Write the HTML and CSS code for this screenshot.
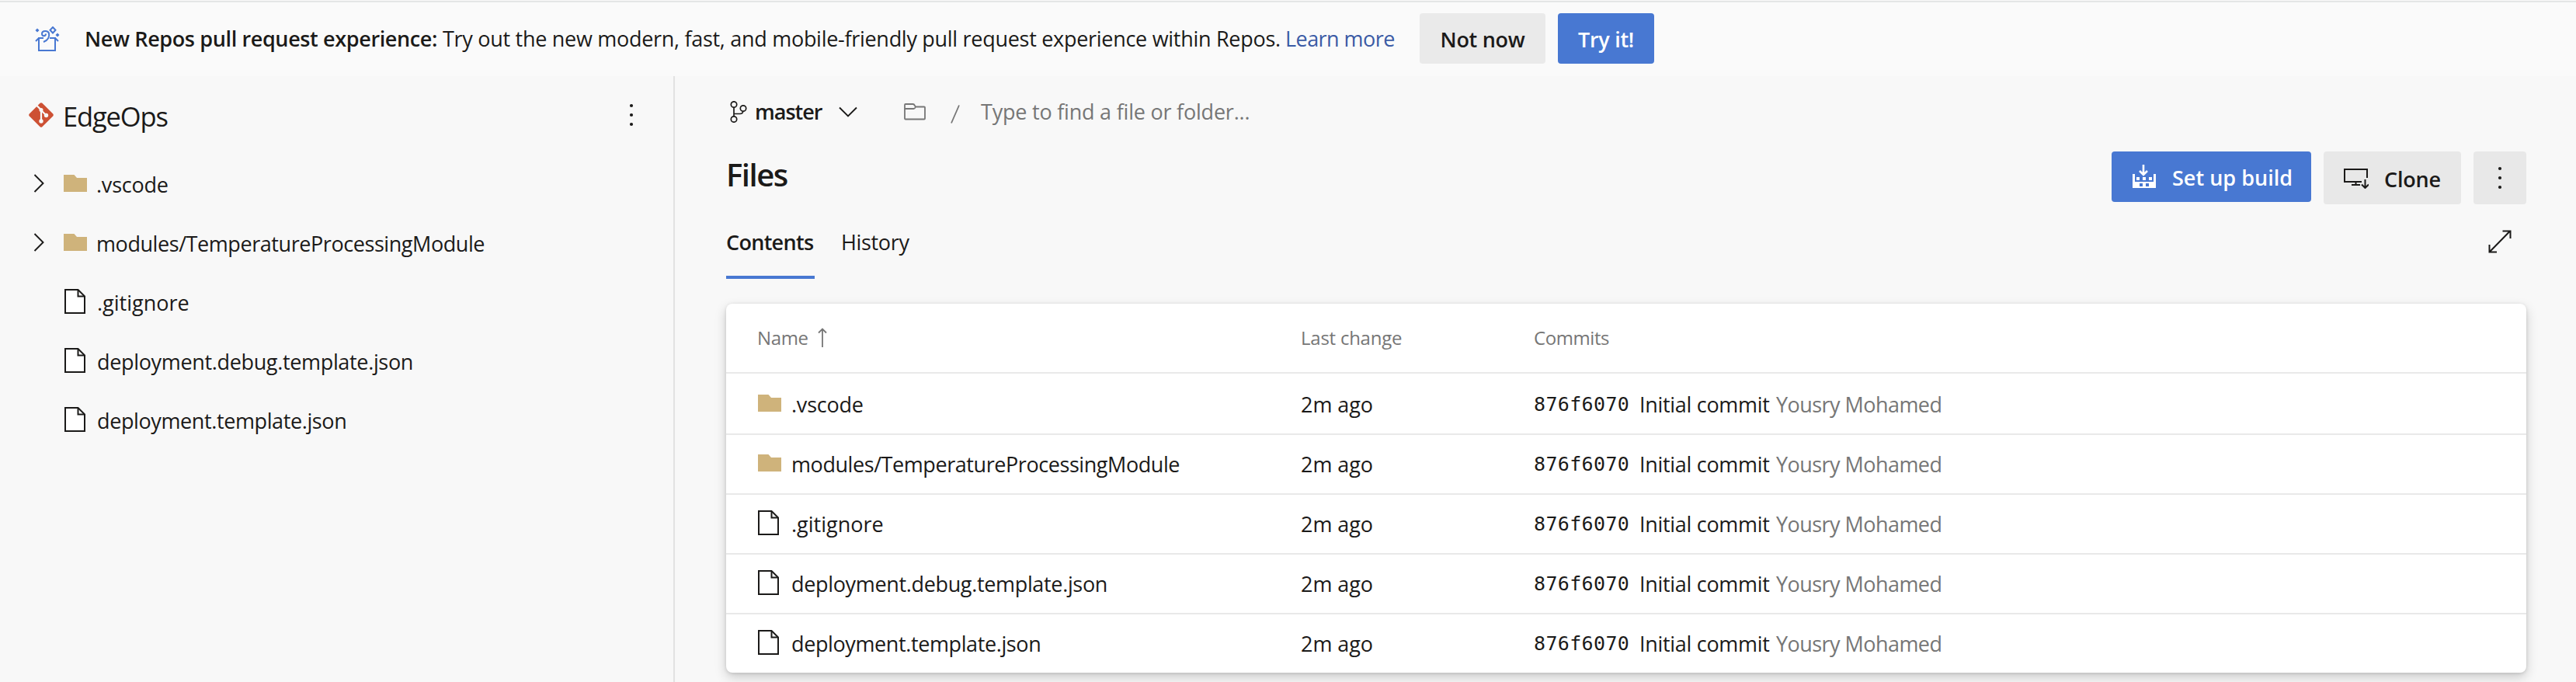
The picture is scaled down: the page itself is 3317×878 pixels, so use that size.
FILE: index.html
```html
<!DOCTYPE html>
<html lang="en">
<head>
<meta charset="utf-8">
<title>EdgeOps - Files</title>
<link rel="stylesheet" href="styles.css">
</head>
<body>
<svg class="sprite" aria-hidden="true">
  <symbol id="folder" viewBox="0 0 30 22"><path d="M0 0H13.5L17 4H30V22H0Z" fill="#cfb37b"/></symbol>
  <symbol id="file" viewBox="0 0 27 32"><path d="M1 1H17.5L26 9.5V31H1Z" fill="#fff" stroke="#1b1a19" stroke-width="2"/><path d="M17.5 1V9.5H26" fill="none" stroke="#1b1a19" stroke-width="2"/></symbol>
  <symbol id="chevron" viewBox="0 0 14 24"><path d="M1.5 1L12.5 12L1.5 23" fill="none" stroke="#1b1a19" stroke-width="1.9"/></symbol>
  <symbol id="dots" viewBox="0 0 6 30"><g fill="#1b1a19"><circle cx="3" cy="3" r="2.1"/><circle cx="3" cy="15" r="2.1"/><circle cx="3" cy="27" r="2.1"/></g></symbol>
</svg>

<header class="banner">
  <svg class="gift" viewBox="0 0 32 34" fill="none" stroke="#4878d2" stroke-width="2">
    <path d="M11 15H5V31H26V15H19M5 15L1 19M26 15L30 19"/>
    <path d="M11 20C17 18 19 13 18 9C17 5 9 5 9 9.500C9 13 14 13 14 9.500"/>
    <path d="M23 1L26.500 4.800L23 8.500L19.500 4.800Z"/>
    <path d="M3 2.500L5.500 5L3 7.500L0.500 5ZM29 8.500L31.500 11L29 13.500L26.500 11Z" fill="#4878d2" stroke="none"/>
  </svg>
  <p class="banner-text"><b>New Repos pull request experience:</b><span class="banner-body">Try out the new modern, fast, and mobile-friendly pull request experience within Repos.</span><a class="link">Learn more</a></p>
  <button class="btn not-now">Not now</button>
  <button class="btn primary try-it">Try it!</button>
</header>

<div class="layout">
  <aside class="sidebar">
    <div class="repo">
      <svg class="git" viewBox="0 0 32 32"><path d="M14.600 .8Q16 -.4 17.400 .8L31.200 14.600Q32.400 16 31.200 17.400L17.400 31.200Q16 32.400 14.600 31.200L.8 17.400Q-.4 16 .8 14.600Z" fill="#cd5134"/><path d="M10 3.500L16 9.500V24M16 10L22.500 16.500" fill="none" stroke="#f8f8f8" stroke-width="2.200"/><circle cx="16" cy="9.500" r="2.500" fill="#f8f8f8"/><circle cx="16" cy="24" r="2.700" fill="#f8f8f8"/><circle cx="22.500" cy="16.500" r="2.700" fill="#f8f8f8"/></svg>
      <span class="repo-name">EdgeOps</span>
      <svg class="dots"><use href="#dots"/></svg>
    </div>
    <ul class="tree">
      <li><svg class="chevron"><use href="#chevron"/></svg><svg class="folder"><use href="#folder"/></svg><span class="t-vscode">.vscode</span></li>
      <li><svg class="chevron"><use href="#chevron"/></svg><svg class="folder"><use href="#folder"/></svg><span class="t-modules">modules/TemperatureProcessingModule</span></li>
      <li><svg class="file"><use href="#file"/></svg><span class="t-git">.gitignore</span></li>
      <li><svg class="file"><use href="#file"/></svg><span class="t-debug">deployment.debug.template.json</span></li>
      <li><svg class="file"><use href="#file"/></svg><span class="t-template">deployment.template.json</span></li>
    </ul>
  </aside>

  <main class="main">
    <div class="path">
      <svg class="branch" viewBox="0 0 22 28" fill="none" stroke="#1b1a19" stroke-width="1.700"><circle cx="5" cy="4.500" r="3.700"/><circle cx="5" cy="23.500" r="3.700"/><circle cx="17" cy="9.500" r="3.700"/><path d="M5 8.200V19.800M5 16.500H13Q16.500 16.500 16.700 13.200"/></svg>
      <span class="branch-name">master</span>
      <svg class="down" viewBox="0 0 24 14"><path d="M1 1.500L12 12.500L23 1.500" fill="none" stroke="#1b1a19" stroke-width="1.900"/></svg>
      <svg class="outline" viewBox="0 0 28 22" fill="none" stroke="#767676" stroke-width="1.800"><path d="M1 19.500V2Q1 1 2 1H11.500Q13 1 14 3L15 4.500H26Q27 4.500 27 5.500V19.500Q27 20.500 26 20.500H2Q1 20.500 1 19.500M1 7H12.500Q14 7 15 4.500"/></svg>
      <svg class="slash" viewBox="0 0 12 24"><path d="M1 23.500L11 .5" stroke="#767676" stroke-width="1.800"/></svg>
      <span class="find">Type to find a file or folder...</span>
    </div>

    <div class="head">
      <h1>Files</h1>
      <button class="btn primary build">
        <svg class="factory" viewBox="0 0 30 31"><path d="M0 12H3V22H27V12H30V30H0Z" fill="#fff"/><path d="M5 16H9V20H5ZM13 16H17V20H13ZM21 16H25V20H21Z" fill="#fff"/><path d="M9 24H13V28H9ZM17 24H21V28H17Z" fill="#4878d2"/><path d="M14 0V12M9 8L14 13L19 8" fill="none" stroke="#fff" stroke-width="2.600"/></svg>
        <span>Set up build</span>
      </button>
      <button class="btn clone">
        <svg class="monitor" viewBox="0 0 32 26" fill="none" stroke="#1b1a19" stroke-width="2"><path d="M23 17H1V1H30V12M15.500 17V21M10 21H21M27.500 14V25M23 20.500L27.500 25L32 20.500"/></svg>
        <span>Clone</span>
      </button>
      <button class="btn more"><svg class="dots"><use href="#dots"/></svg></button>
    </div>

    <nav class="tabs">
      <a class="tab active">Contents</a>
      <a class="tab history">History</a>
      <svg class="expand" viewBox="0 0 30 30" fill="none" stroke="#1b1a19" stroke-width="2"><path d="M1.500 28.500L28 1.500M18.500 1.500H28.500V11M1.500 19V28.500H11"/></svg>
    </nav>

    <section class="card">
      <div class="row header"><span class="name">Name<svg class="arrow" viewBox="0 0 12 26"><path d="M6 25V1.500M1 6.500L6 1.500L11 6.500" fill="none" stroke="#767676" stroke-width="1.800"/></svg></span><span class="last">Last change</span><span class="commits">Commits</span></div>
      <div class="row"><span class="name"><svg class="folder"><use href="#folder"/></svg><span class="t-vscode">.vscode</span></span><span class="ago">2m ago</span><span class="commit"><code>876f6070</code><span class="message">Initial commit</span><span class="author">Yousry Mohamed</span></span></div>
      <div class="row"><span class="name"><svg class="folder"><use href="#folder"/></svg><span class="t-modules">modules/TemperatureProcessingModule</span></span><span class="ago">2m ago</span><span class="commit"><code>876f6070</code><span class="message">Initial commit</span><span class="author">Yousry Mohamed</span></span></div>
      <div class="row"><span class="name"><svg class="file"><use href="#file"/></svg><span class="t-git">.gitignore</span></span><span class="ago">2m ago</span><span class="commit"><code>876f6070</code><span class="message">Initial commit</span><span class="author">Yousry Mohamed</span></span></div>
      <div class="row"><span class="name"><svg class="file"><use href="#file"/></svg><span class="t-debug">deployment.debug.template.json</span></span><span class="ago">2m ago</span><span class="commit"><code>876f6070</code><span class="message">Initial commit</span><span class="author">Yousry Mohamed</span></span></div>
      <div class="row"><span class="name"><svg class="file"><use href="#file"/></svg><span class="t-template">deployment.template.json</span></span><span class="ago">2m ago</span><span class="commit"><code>876f6070</code><span class="message">Initial commit</span><span class="author">Yousry Mohamed</span></span></div>
    </section>
  </main>
</div>
</body>
</html>
```
FILE: styles.css
```css
* { box-sizing: border-box; }
body {
  margin: 0;
  height: 878px;
  overflow: hidden;
  background: #f8f8f8;
  color: #1b1a19;
  font: 400 27px/36px "Open Sans", "Noto Sans", sans-serif;
  white-space: nowrap;
}
svg { display: block; flex: none; }
.sprite { position: absolute; width: 0; height: 0; }

.banner {
  display: flex;
  align-items: flex-start;
  height: 97px;
  margin-top: 1px;
  border-top: 2px solid #e4e6e6;
  background: #fafafa;
}
.gift { width: 32px; height: 34px; margin: 31px 0 0 45px; }
.banner-text { display: flex; margin: 29px 0 0 32px; }
.banner-text b { width: 461px; font-weight: 600; letter-spacing: -0.37px; }
.banner-body { width: 1085px; letter-spacing: -0.29px; }
.link { width: 173px; color: #3b5ba5; letter-spacing: -0.55px; }

.btn {
  display: flex;
  align-items: center;
  height: 65px;
  padding: 0;
  border: 0;
  border-radius: 4px;
  background: #eaeaea;
  color: #1b1a19;
  font: 600 27px/36px "Open Sans", "Noto Sans", sans-serif;
}
.btn.primary { background: #4878d2; color: #fff; }
.banner .btn { justify-content: center; margin-top: 14px; padding-top: 2px; }
.not-now { width: 162px; letter-spacing: -0.3px; }
.banner .try-it { width: 124px; margin-left: 16px; letter-spacing: -0.3px; }

.layout { display: flex; height: 780px; }
.sidebar { width: 869px; border-right: 2px solid #e2e2e2; }
.repo { display: flex; align-items: center; height: 102px; padding: 0 51px 0 37px; }
.git { width: 32px; height: 32px; margin-top: -3px; }
.repo-name { flex: 1; margin: 1px 0 0 12px; font-size: 34.500px; letter-spacing: -1.150px; }
.dots { width: 6px; height: 30px; }
.repo .dots { margin-top: -2px; }
.tree { margin: 0; padding: 0; list-style: none; }
.tree li { display: flex; align-items: center; height: 76px; padding-left: 43px; }
.chevron { width: 14px; height: 24px; margin: -4px 25px 0 0; }
.folder { width: 30px; height: 22px; margin: -4px 13px 0 0; }
.file { width: 27px; height: 32px; margin: -4px 16px 0 0; }
.tree .folder { margin-right: 12px; }
.tree .file { margin: -4px 15px 0 40px; }
.t-vscode { letter-spacing: -0.22px; }
.t-modules { letter-spacing: -0.43px; }
.t-git { letter-spacing: 0; }
.t-debug { letter-spacing: -0.34px; }
.t-template { letter-spacing: -0.39px; }

.main { flex: 1; padding: 0 64px 0 66px; }
.path { display: flex; align-items: center; height: 91px; color: #767676; }
.branch { width: 22px; height: 28px; margin-left: 5px; }
.branch-name { width: 110px; margin-left: 10px; color: #1b1a19; font-weight: 600; letter-spacing: -1px; }
.down { width: 24px; height: 14px; margin-left: -2px; }
.outline { width: 28px; height: 22px; margin-left: 60px; }
.slash { width: 12px; height: 24px; margin: 6px 0 0 32px; }
.find { margin-left: 27px; letter-spacing: -0.22px; }

.head { display: flex; align-items: flex-start; height: 76px; padding-top: 6px; }
h1 { flex: 1; margin: -6px 0 0; font-size: 40px; line-height: 71px; font-weight: 600; letter-spacing: -1.450px; }
.build { width: 257px; padding-left: 27px; }
.factory { width: 30px; height: 31px; margin: -1px 21px 0 0; }
.build span { padding-top: 2px; letter-spacing: 0.02px; }
.clone { width: 177px; height: 68px; margin-left: 16px; padding-left: 26px; background: #e8e8e8; }
.monitor { width: 32px; height: 26px; margin: 2px 20px 0 0; }
.clone span { padding-top: 3px; letter-spacing: -0.2px; }
.more { width: 68px; height: 68px; margin-left: 16px; justify-content: center; background: #e8e8e8; }

.tabs { display: flex; height: 94px; }
.tab { line-height: 94px; }
.tab.active { width: 114px; border-bottom: 4px solid #4878d2; font-weight: 600; letter-spacing: -0.700px; }
.history { flex: 1; margin-left: 34px; letter-spacing: -0.350px; }
.expand { width: 30px; height: 30px; margin: 31px 19px 0 0; }

.card {
  height: 475px;
  margin-top: 32px;
  border-radius: 8px;
  background: #fff;
  box-shadow: 0 6px 15px rgba(0, 0, 0, 0.18), 0 1px 4px rgba(0, 0, 0, 0.13);
}
.row {
  display: grid;
  grid-template-columns: 699px 300px 1fr;
  align-items: center;
  height: 77px;
  padding-left: 41px;
  border-bottom: 2px solid #e9e9e9;
}
.row.header { height: 90px; color: #767676; font-size: 24px; font-weight: 500; }
.header + .row { height: 79px; padding-top: 2px; }
.row:last-child { height: 75px; border: 0; }
.name { display: flex; align-items: center; }
.header .name { margin-left: -1px; letter-spacing: -0.38px; }
.arrow { width: 12px; height: 26px; margin-left: 12px; }
.last { letter-spacing: -0.24px; }
.commits { letter-spacing: -0.43px; }
.ago { letter-spacing: -0.06px; }
.commit { display: flex; }
code { width: 136px; font: 25px/36px "DejaVu Sans Mono", monospace; letter-spacing: 0.350px; }
.message { width: 176px; letter-spacing: -0.300px; }
.author { color: #767676; letter-spacing: -0.550px; }
```
